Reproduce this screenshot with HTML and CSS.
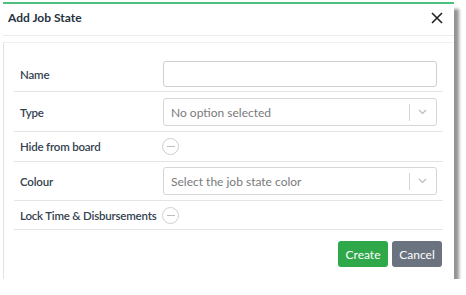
FILE: index.html
```html
<!DOCTYPE html>
<html>
<head>
<meta charset="utf-8">
<link rel="stylesheet" href="styles.css">
</head>
<body>
<div class="dialog">
  <div class="header">
    <span class="title">Add Job State</span>
    <svg class="close" width="12" height="12" viewBox="0 0 12 12"><path d="M1 1L11 11M11 1L1 11" stroke="#222" stroke-width="1.6" fill="none"/></svg>
  </div>
  <div class="body">
    <div class="row r-name">
      <label class="label">Name</label>
      <div class="input"></div>
    </div>
    <div class="row r-select">
      <label class="label">Type</label>
      <div class="select"><span class="ph">No option selected</span><span class="sep"></span><svg class="chev" width="9" height="6" viewBox="0 0 9 6"><path d="M1 1L4.5 4.5L8 1" stroke="#bbb" stroke-width="1.2" fill="none"/></svg></div>
    </div>
    <div class="row r-toggle">
      <label class="label">Hide from board</label>
      <span class="toggle"><span class="minus"></span></span>
    </div>
    <div class="row r-select r-colour">
      <label class="label">Colour</label>
      <div class="select"><span class="ph">Select the job state color</span><span class="sep"></span><svg class="chev" width="9" height="6" viewBox="0 0 9 6"><path d="M1 1L4.5 4.5L8 1" stroke="#bbb" stroke-width="1.2" fill="none"/></svg></div>
    </div>
    <div class="row r-toggle r-last">
      <label class="label">Lock Time &amp; Disbursements</label>
      <span class="toggle"><span class="minus"></span></span>
    </div>
    <div class="footer">
      <button class="btn create">Create</button>
      <button class="btn cancel">Cancel</button>
    </div>
  </div>
</div>
</body>
</html>
```
FILE: styles.css
```css
* { box-sizing: border-box; }
body {
  margin: 0;
  background: #fff;
  font-family: Lato, "Open Sans", sans-serif;
}
.dialog {
  margin: 2px 0 0 3px;
  width: 451px;
  height: 277px;
  background: #fff;
  border-top: 2px solid #4cc27e;
  box-shadow: 5px 7px 3px rgba(0,0,0,0.42);
  display: flex;
  flex-direction: column;
}
.header {
  height: 32px;
  border-bottom: 1px solid #ececec;
  display: flex;
  align-items: center;
  justify-content: space-between;
  padding: 0 11px 4px 5px;
}
.title {
  font-weight: 700;
  font-size: 12px;
  color: #27323f;
}
.close { display: block; }
.body {
  margin-top: 6px;
  flex: 1;
  border-top: 1px solid #f0f0f0;
  border-left: 1px solid #e2e2e2;
  padding: 12px 11px 0 10px;
}
.row {
  display: grid;
  grid-template-columns: 143px 1fr;
  align-items: center;
  padding: 0 6px;
  border-bottom: 1px solid #e4e4e4;
}
.r-name { padding-top: 6px; padding-bottom: 4px; }
.r-select { padding-top: 6px; padding-bottom: 5px; }
.r-colour { padding-top: 5px; }
.r-toggle { height: 30px; }
.r-last { height: 29px; }
.label {
  font-size: 11.5px;
  letter-spacing: -0.2px;
  font-weight: 600;
  color: #34424f;
  white-space: nowrap;
}
.input {
  height: 26px;
  border: 1px solid #cfcfcf;
  border-radius: 3px;
}
.select {
  height: 28px;
  border: 1px solid #d6d6d6;
  border-radius: 3px;
  display: flex;
  align-items: center;
  padding-left: 7px;
}
.ph {
  flex: 1;
  font-size: 12px;
  color: #7a7a7a;
}
.sep {
  width: 1px;
  height: 17px;
  background: #d4d4d4;
}
.chev {
  display: block;
  margin: 0 9px 0 8px;
}
.toggle {
  width: 17px;
  height: 17px;
  border: 1px solid #cfcfcf;
  border-radius: 50%;
  display: flex;
  align-items: center;
  justify-content: center;
  margin-left: -1px;
}
.minus {
  width: 8px;
  height: 1px;
  background: #bdbdbd;
}
.footer {
  display: flex;
  justify-content: flex-end;
  gap: 4px;
  padding-top: 11px;
  margin-right: 1px;
}
.btn {
  height: 26px;
  width: 50px;
  border: none;
  border-radius: 3px;
  color: #fff;
  font-family: Lato, "Open Sans", sans-serif;
  font-size: 12px;
  padding: 0;
}
.create { background: #2fa84a; }
.cancel { background: #6b7380; }
```
